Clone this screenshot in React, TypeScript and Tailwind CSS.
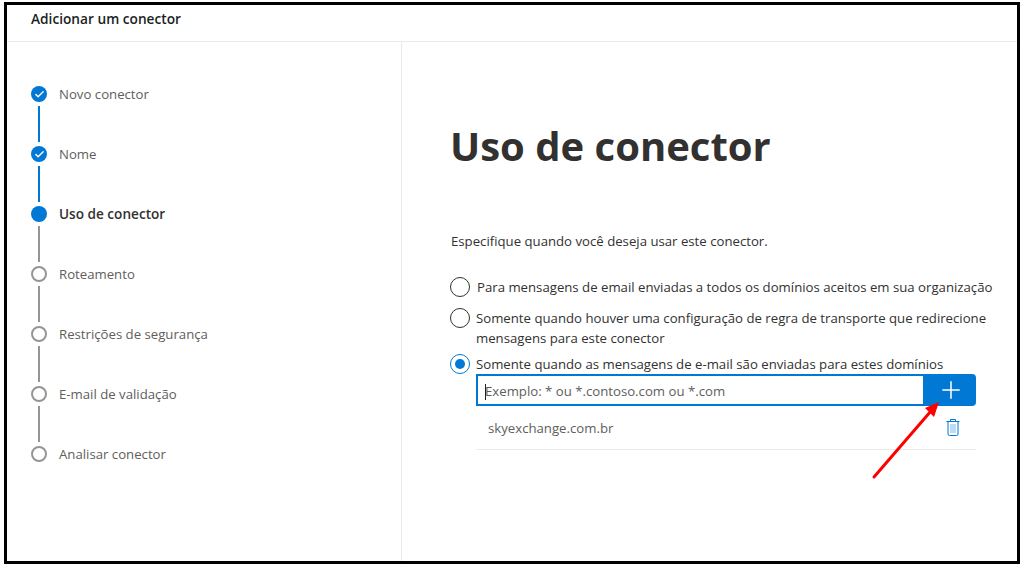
import { Check, Plus } from "lucide-react";

const STEPS = [
  { label: "Novo conector", state: "done" },
  { label: "Nome", state: "done" },
  { label: "Uso de conector", state: "current" },
  { label: "Roteamento", state: "todo" },
  { label: "Restrições de segurança", state: "todo" },
  { label: "E-mail de validação", state: "todo" },
  { label: "Analisar conector", state: "todo" },
];

function StepDot({ state }: { state: string }) {
  if (state === "done") {
    return (
      <span className="flex h-4 w-4 items-center justify-center rounded-full bg-[#0078d4]">
        <Check size={11} strokeWidth={3} className="text-white" />
      </span>
    );
  }
  if (state === "current") {
    return <span className="block h-4 w-4 rounded-full bg-[#0078d4]" />;
  }
  return <span className="block h-4 w-4 rounded-full border-2 border-[#979593] bg-white" />;
}

function Radio({ checked }: { checked?: boolean }) {
  return (
    <span
      className={`flex h-5 w-5 shrink-0 items-center justify-center rounded-full border bg-white ${
        checked ? "border-[#0078d4]" : "border-[#323130]"
      }`}
    >
      {checked && <span className="block h-2.5 w-2.5 rounded-full bg-[#0078d4]" />}
    </span>
  );
}

function TrashIcon() {
  return (
    <svg width="14" height="17" viewBox="0 0 14 17" fill="none" stroke="#0078d4" strokeWidth="1">
      <path d="M0.5 2.5 H13.5" />
      <path d="M4.5 2.5 V0.5 H9.5 V2.5" />
      <path d="M2 2.5 V15 Q2 16.5 3.5 16.5 H10.5 Q12 16.5 12 15 V2.5" />
      <path d="M5 5 V14 M7 5 V14 M9 5 V14" stroke="#7db8e8" />
    </svg>
  );
}

export default function App() {
  return (
    <div className="h-[567px] w-[1024px] overflow-hidden bg-white pb-[3px] pl-1 pr-1 pt-0.5 font-['Open_Sans',sans-serif]">
      <div className="relative flex h-full flex-col border-[3px] border-black bg-white">
        <div className="flex h-[37px] shrink-0 items-start border-b border-[#edebe9] pl-6 pt-1 text-[13.7px] font-semibold leading-5 text-[#201f1e]">
          Adicionar um conector
        </div>
        <div className="flex flex-1">
          <div className="w-[395px] shrink-0 border-r border-[#edebe9] pl-6 pt-11">
            {STEPS.map((step, i) => (
              <div key={step.label} className="flex h-[60px] flex-col">
                <div className="flex h-4 items-center gap-3 leading-4 text-[#605e5c]">
                  <StepDot state={step.state} />
                  <span className={step.state === "current" ? "text-[13.6px] font-semibold text-[#323130]" : "text-[13.2px]"}>
                    {step.label}
                  </span>
                </div>
                {i < STEPS.length - 1 && (
                  <span
                    className={`ml-[7px] mt-1 block h-9 w-0.5 ${
                      step.state === "done" ? "bg-[#0078d4]" : "bg-[#979593]"
                    }`}
                  />
                )}
              </div>
            ))}
          </div>
          <div className="flex-1 pl-[48px] pr-6">
            <h1 className="mt-[75px] text-[40px] font-bold leading-[58px] text-[#323130]">
              Uso de conector
            </h1>
            <p className="mt-[56px] pl-px text-[13.2px] leading-5 text-[#323130]">
              Especifique quando você deseja usar este conector.
            </p>
            <div className="mt-[26px] flex items-center gap-[7px] text-[13.2px] leading-5 text-[#323130]">
              <Radio />
              <span className="whitespace-nowrap">Para mensagens de email enviadas a todos os domínios aceitos em sua organização</span>
            </div>
            <div className="mt-[11px] flex items-start gap-[6px] text-[13.2px] leading-5 text-[#323130]">
              <Radio />
              <span className="whitespace-nowrap">
                Somente quando houver uma configuração de regra de transporte que redirecione
                <br />
                mensagens para este conector
              </span>
            </div>
            <div className="mt-[6px] flex items-center gap-[6px] text-[13.2px] leading-5 text-[#323130]">
              <Radio checked />
              <span className="whitespace-nowrap">Somente quando as mensagens de e-mail são enviadas para estes domínios</span>
            </div>
            <div className="ml-[26px] w-[500px]">
              <div className="flex h-8">
                <div className="flex flex-1 items-center border-2 border-[#0078d4] pl-[7px] pt-1 text-[13.2px] text-[#605e5c]">
                  <span className="mr-[-1px] h-4 w-px bg-[#201f1e]" />
                  Exemplo: * ou *.contoso.com ou *.com
                </div>
                <button className="flex w-[51px] items-center justify-center rounded-r-sm bg-[#0078d4] pl-px">
                  <Plus size={28} strokeWidth={1.3} className="text-white" />
                </button>
              </div>
              <div className="flex h-[44px] items-center justify-between border-b border-[#edebe9] pl-3 pr-4 text-[13.2px] text-[#605e5c]">
                <span className="pt-0.5">skyexchange.com.br</span>
                <TrashIcon />
              </div>
            </div>
          </div>
        </div>
        <svg
          className="absolute left-[864px] top-[394px] h-[84px] w-[74px]"
          viewBox="0 0 74 84"
          fill="none"
        >
          <path d="M3 78 L60 12" stroke="#ff0000" strokeWidth="3" strokeLinecap="round" />
          <path d="M68 3 L63 18 L54 9 Z" fill="#ff0000" />
        </svg>
      </div>
    </div>
  );
}
